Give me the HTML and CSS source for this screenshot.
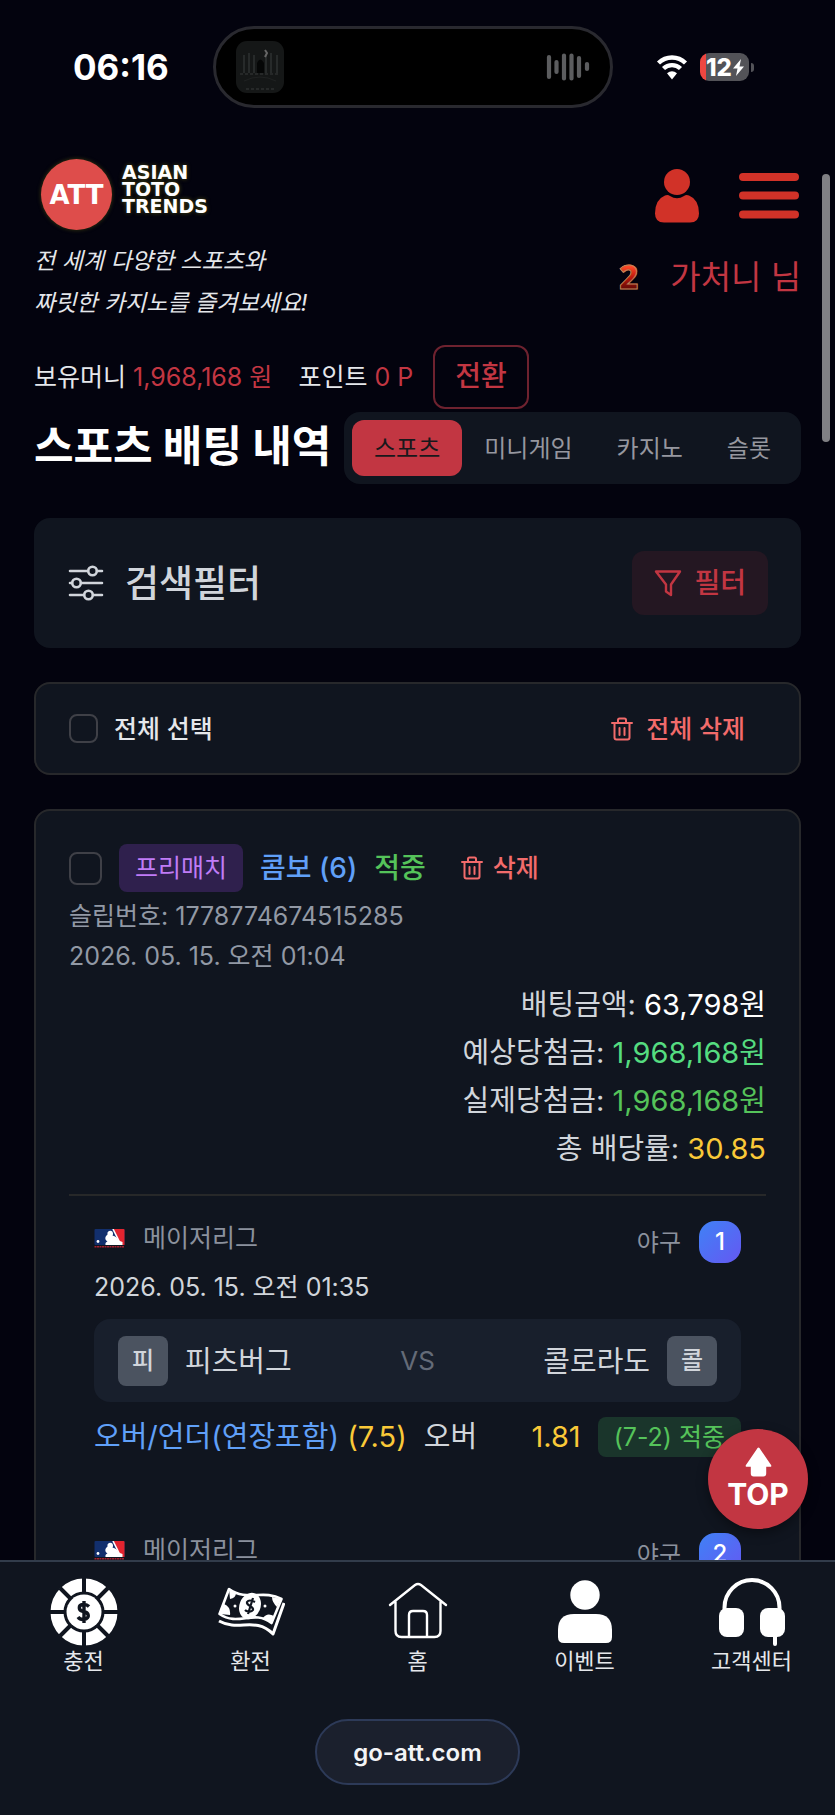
FILE: index.html
```html
<!DOCTYPE html>
<html lang="ko">
<head>
<meta charset="utf-8">
<meta name="viewport" content="width=device-width, initial-scale=1">
<title>스포츠 배팅 내역</title>
<link rel="stylesheet" href="styles.css">
</head>
<body>
<svg width="0" height="0" class="defs" aria-hidden="true">
  <symbol id="trash" viewBox="0 0 22 24"><path d="M1 6h20M7 6V3a1.500 1.500 0 0 1 1.500-1.500h5A1.500 1.500 0 0 1 15 3v3M3.500 6v14.500a2 2 0 0 0 2 2h11a2 2 0 0 0 2-2V6M8.500 11v7M13.500 11v7" fill="none" stroke="currentColor" stroke-width="2" stroke-linecap="round"/></symbol>
  <symbol id="mlb" viewBox="0 0 30 19"><rect width="30" height="16" rx="1" fill="#122f6d"/><path d="M19 0h10a1 1 0 0 1 1 1v15h-4z" fill="#e3242f"/><path d="M11 16c-.5-2 .5-3 2-3.500-2-1-2.500-3-2-4.500.5-1.300 1.500-2 2-2.500C12.500 3 14 1.800 15.800 1.800c1.700 0 2.700 1.200 2.700 2.700 0 1 0 1.500-.5 2 3 .5 5 2.500 6 5l4 1.500v3z" fill="#fff"/><path d="M18.500 0l6.500 13" stroke="#fff" stroke-width="1.600"/><circle cx="3.500" cy="12.500" r="1.400" fill="#fff"/><path d="M0 17.800h30" stroke="#a3202f" stroke-width="1.600" stroke-dasharray="2 .5"/></symbol>
</svg>
<div class="app">
  <main class="screen">
    <div class="status">
      <time class="clock">06:16</time>
      <div class="island">
        <svg class="art" viewBox="0 0 48 52" aria-hidden="true"><rect width="48" height="52" rx="11" fill="#151717"/><path d="M8 14v18M13 12v20M18 14v18M30 14v18M35 12v20M41 14v18" stroke="#272a2a" stroke-width="2"/><path d="M21 32V22q3-7 7 0v10z" fill="#050606"/><path d="M4 33h40M10 48h30" stroke="#383b3b" stroke-width="1" stroke-dasharray="3 2"/><path d="M29 9l2 3-2 4" stroke="#666" stroke-width="2" fill="none"/><path d="M8 40q16-8 32 0" stroke="#202222" fill="none"/></svg>
        <svg class="wave" viewBox="0 0 44 28" aria-hidden="true"><path d="M3 4v20M10.500 9v10M18 2.500v23M25.500 2.500v23M33 5v18M41 11v5" stroke="#5c5d5f" stroke-width="4.200" stroke-linecap="round"/></svg>
      </div>
      <div class="signals">
        <svg class="wifi" viewBox="0 0 32 26" aria-hidden="true"><path d="M2.500 9a19.500 19.500 0 0 1 27 0M7.500 14.500a12.300 12.300 0 0 1 17 0" fill="none" stroke="#fff" stroke-width="4.400"/><path d="M11 19.300q5-4 10 0L16 25.500z" fill="#fff"/></svg>
        <div class="battery"><span>12</span><svg viewBox="0 0 11 17" aria-hidden="true"><path d="M8 0L0 9.500h4.500L3 17l8-9.500H6.500z" fill="#fff"/></svg></div>
        <i class="battery-tip"></i>
      </div>
    </div>

    <header class="header">
      <div class="brand">
        <div class="logo">
          <span class="logo-mark">ATT</span>
          <span class="logo-name">ASIAN<br>TOTO<br>TRENDS</span>
        </div>
        <p class="tagline">전 세계 다양한 스포츠와<br>짜릿한 카지노를 즐겨보세요!</p>
      </div>
      <div class="account">
        <div class="account-icons">
          <button class="icon-btn" aria-label="내 정보"><svg class="person" viewBox="0 0 44 54"><ellipse cx="22" cy="13" rx="13" ry="13"/><path d="M10 26.500q3-1 5 .5 7 4.500 14 0 2-1.500 5-.5 10 4 10 18 0 9-9 9H9q-9 0-9-9 0-14 10-18z"/></svg></button>
          <button class="icon-btn" aria-label="메뉴"><svg class="menu" viewBox="0 0 60 46"><path d="M4 4h52M4 22.500h52M4 41.500h52" stroke-width="8" stroke-linecap="round"/></svg></button>
        </div>
        <div class="user"><span class="level">2</span><span>가처니 님</span></div>
      </div>
    </header>

    <div class="balance">
      <span>보유머니 <b>1,968,168 원</b></span>
      <span>포인트 <b>0 P</b></span>
      <button class="convert">전환</button>
    </div>

    <div class="title-row">
      <h1>스포츠 배팅 내역</h1>
      <div class="tabs">
        <button class="tab active">스포츠</button><button class="tab">미니게임</button><button class="tab">카지노</button><button class="tab">슬롯</button>
      </div>
    </div>

    <section class="filter card">
      <svg class="sliders" viewBox="0 0 36 36" aria-hidden="true"><g fill="none" stroke="currentColor" stroke-width="2.600" stroke-linecap="round"><path d="M2 6h18M29 6h5M2 18h2M13 18h21M2 30h14M25 30h9"/><circle cx="24.500" cy="6" r="4.300"/><circle cx="8.500" cy="18" r="4.300"/><circle cx="20.500" cy="30" r="4.300"/></g></svg>
      <h2>검색필터</h2>
      <button class="filter-btn"><svg viewBox="0 0 28 28" aria-hidden="true"><path d="M2 2.500h24L17 15.500v10.500l-5-3.500v-7z" fill="none" stroke="currentColor" stroke-width="2.400" stroke-linejoin="round"/></svg><span class="lift">필터</span></button>
    </section>

    <section class="select-all card outlined">
      <label><input type="checkbox" class="check"><span class="lift">전체 선택</span></label>
      <button class="delete"><svg><use href="#trash"/></svg><span class="lift">전체 삭제</span></button>
    </section>

    <section class="bet card outlined">
      <div class="bet-head">
        <input type="checkbox" class="check large" aria-label="배팅 선택">
        <span class="badge">프리매치</span>
        <span class="combo lift">콤보 (6)</span>
        <span class="win lift">적중</span>
        <button class="delete"><svg><use href="#trash"/></svg><span class="lift">삭제</span></button>
      </div>
      <p class="meta">슬립번호: <span class="serial">1778774674515285</span><br>2026. 05. 15. 오전 01:04</p>
      <div class="amounts">
        <div>배팅금액: <b>63,798원</b></div>
        <div>예상당첨금: <b class="expected">1,968,168원</b></div>
        <div>실제당첨금: <b class="win">1,968,168원</b></div>
        <div>총 배당률: <b class="odds">30.85</b></div>
      </div>
      <article class="match">
        <div class="league"><div class="league-name"><svg><use href="#mlb"/></svg><span>메이저리그</span></div><span class="sport">야구</span><span class="num">1</span></div>
        <time class="when">2026. 05. 15. 오전 01:35</time>
        <div class="teams">
          <div><span class="avatar">피</span><span class="lift">피츠버그</span></div>
          <span class="vs">VS</span>
          <div><span class="lift">콜로라도</span><span class="avatar">콜</span></div>
        </div>
        <div class="pick"><span class="market">오버/언더(연장포함) <span class="odds">(7.5)</span></span><span>오버</span><span class="odds rate">1.81</span><span class="result">(7-2) 적중</span></div>
      </article>
      <article class="match">
        <div class="league"><div class="league-name"><svg><use href="#mlb"/></svg><span>메이저리그</span></div><span class="sport">야구</span><span class="num">2</span></div>
      </article>
    </section>
    <i class="thumb"></i>
    <button class="top"><svg viewBox="0 0 28 30" aria-hidden="true"><path d="M14 0q1 0 2 2l11 16q1 2-1 2h-4v7q0 3-3 3H9q-3 0-3-3v-7H2q-2 0-1-2L12 2q1-2 2-2z" fill="#fff"/></svg>TOP</button>
  </main>

  <footer class="footer">
    <nav class="nav">
      <a href="#"><svg viewBox="0 0 68 68" aria-hidden="true"><circle cx="34" cy="34" r="27" fill="none" stroke="#fff" stroke-width="13"/><path d="M34 0v14M34 54v14M0 34h14M54 34h14M10 10l11 11M47 47l11 11M58 10L47 21M21 47L10 58" stroke="#10151f" stroke-width="4"/><circle cx="34" cy="34" r="17.500" fill="#fff"/><path d="M39 28.500q-2.500-2.500-6-2c-5 .5-5 6 .5 7s7 6.500.5 8q-4 .5-6-2.500M34 23v22" fill="none" stroke="#10151f" stroke-width="3.400"/></svg>충전</a>
      <a href="#"><svg viewBox="0 0 68 68" aria-hidden="true"><g fill="none" stroke="#fff" stroke-width="2.600" stroke-linejoin="round"><path d="M12 11L2.500 36c19 13 34-5 52 9l10-24C46 11 30 24 12 11z"/><path d="M2 43c20 11 36-5 54 13l11-31" stroke-width="3"/></g><path d="M12 11l7 4q0 5-6 6zM3 36l4-10q7 3 6 11zM64 21l-9-2q0 5 5 10zM55 45l-9-5q4-6 11-2z" fill="#fff"/><ellipse cx="33" cy="28" rx="10.500" ry="13.500" transform="rotate(22 33 28)" fill="#fff"/><path d="M38 24q-6-3-8 0c-1 4 7 4 6 8-2 3-7 1-8 0M36 20l-5 16" fill="none" stroke="#10151f" stroke-width="2.200"/><circle cx="18" cy="28" r="1.500" fill="#fff"/><circle cx="48" cy="28" r="1.500" fill="#fff"/></svg>환전</a>
      <a href="#"><svg viewBox="0 0 68 68" aria-hidden="true"><path d="M6 27L31 7q3-2 6 0l25 20M11.500 24v29q0 6 6 6h33q6 0 6-6V24M25 59V37q0-4 4-4h10q4 0 4 4v22" fill="none" stroke="#fff" stroke-width="2.400" stroke-linecap="round"/></svg>홈</a>
      <a href="#"><svg viewBox="0 0 68 68" aria-hidden="true"><circle cx="34" cy="17" r="14.700" fill="#fff"/><path d="M7 59V52q0-16 16-16h22q16 0 16 16v7q0 6-6 6H13q-6 0-6-6z" fill="#fff"/></svg>이벤트</a>
      <a href="#"><svg viewBox="0 0 68 68" aria-hidden="true"><path d="M6.500 35V29.500a27.500 27.500 0 0 1 55 0V35" fill="none" stroke="#fff" stroke-width="4"/><path d="M57 55v11" stroke="#fff" stroke-width="4" stroke-linecap="round"/><rect x="1" y="30" width="25" height="29" rx="8" fill="#fff"/><rect x="42" y="30" width="25" height="29" rx="8" fill="#fff"/></svg>고객센터</a>
    </nav>
    <button class="url">go-att.com</button>
  </footer>
</div>
</body>
</html>
```
FILE: styles.css
```css
* { box-sizing: border-box; }

body {
  margin: 0;
  background: #03030e;
  color: #e5e7eb;
  font-family: Inter, "Noto Sans CJK KR", sans-serif;
  font-size: 24px;
}

button {
  border: 0;
  padding: 0;
  background: none;
  color: inherit;
  font: inherit;
}

h1, h2, p { margin: 0; }
b { font-weight: 400; }
svg { display: block; flex: none; }
.defs { position: absolute; }
.lift { padding-bottom: 4px; }

.app {
  display: flex;
  flex-direction: column;
  height: 100vh;
}

.screen {
  position: relative;
  flex: 1;
  min-height: 0;
  overflow: hidden;
  padding: 0 34px;
}

/* Status bar */
.status {
  display: grid;
  grid-template-columns: 179px 400px 1fr;
  align-items: center;
  padding-top: 26px;
}
.clock {
  padding-left: 39px;
  color: #fff;
  font-size: 35px;
  font-weight: 700;
}
.island {
  display: flex;
  align-items: center;
  justify-content: space-between;
  height: 82px;
  padding: 0 20px;
  border: 3px solid #29292f;
  border-radius: 41px;
  background: #000;
}
.art { width: 48px; height: 52px; }
.wave { width: 44px; height: 28px; }
.signals {
  display: flex;
  align-items: center;
  padding-left: 43px;
}
.wifi { width: 32px; height: 26px; margin-right: 12px; }
.battery {
  display: flex;
  align-items: center;
  gap: 1px;
  width: 49px;
  height: 28px;
  padding-left: 6px;
  border-radius: 9px;
  background: linear-gradient(90deg, #ee4741 6px, #535358 6px);
  color: #fff;
  font-size: 24px;
  font-weight: 800;
}
.battery svg { width: 11px; height: 17px; }
.battery-tip {
  width: 3px;
  height: 9px;
  margin-left: 2px;
  border-radius: 0 4px 4px 0;
  background: #535358;
}

/* Header */
.header {
  display: flex;
  justify-content: space-between;
  padding-top: 51px;
}
.logo {
  display: flex;
  gap: 10px;
  height: 71px;
  padding-left: 7px;
  color: #fff;
  font-family: "DejaVu Sans", sans-serif;
  font-weight: 700;
}
.logo-mark {
  display: flex;
  align-items: center;
  justify-content: center;
  width: 71px;
  border-radius: 50%;
  background: #de4d4b;
  box-shadow: 0 0 4px #3a3a10;
  font-size: 26px;
}
.logo-name {
  padding-top: 5px;
  font-size: 19px;
  line-height: 17px;
  text-shadow: 0 0 4px #4a4a10;
}
.tagline {
  padding-top: 10px;
  font-size: 23px;
  font-style: italic;
  line-height: 42px;
}
.account-icons {
  display: flex;
  align-items: center;
  justify-content: flex-end;
  gap: 40px;
  height: 73px;
  padding-right: 2px;
}
.icon-btn { fill: #d13228; stroke: #d13228; stroke-width: 0; }
.person { width: 44px; height: 54px; }
.menu { width: 60px; height: 46px; }
.user {
  display: flex;
  align-items: center;
  justify-content: flex-end;
  gap: 30px;
  padding-top: 19px;
  color: #c23642;
  font-size: 33px;
  line-height: 52px;
}
.level {
  padding: 0 2px;
  background: linear-gradient(#ff4a28 30%, #c0180c 50%, #6d0b06 70%);
  background-clip: text;
  color: transparent;
  font-family: "Noto Sans", sans-serif;
  font-size: 33px;
  font-weight: 800;
  -webkit-text-stroke: 1px #b98558;
}

.balance {
  display: flex;
  align-items: center;
  gap: 26px;
  margin-top: 21px;
  font-size: 25px;
}
.balance span { padding-bottom: 4px; }
.balance b { color: #c23642; }
.convert {
  height: 64px;
  margin-left: -6px;
  padding: 0 20px 6px;
  border: 2px solid #6e222f;
  border-radius: 12px;
  color: #c23642;
  font-size: 28px;
  font-weight: 500;
}

.title-row {
  display: flex;
  align-items: center;
  justify-content: space-between;
  margin-top: 3px;
  white-space: nowrap;
}
h1 {
  padding-bottom: 4px;
  color: #fff;
  font-size: 43px;
  font-weight: 700;
  line-height: 60px;
}
.tabs {
  display: flex;
  padding: 8px;
  border-radius: 16px;
  background: #10151f;
}
.tab {
  height: 56px;
  padding: 0 22px 4px;
  border-radius: 12px;
  color: #96979f;
}
.tab.active { background: #c23642; color: #18181b; }

/* Cards */
.card {
  margin-top: 34px;
  padding: 0 33px;
  border-radius: 16px;
  background: #10151f;
}
.outlined { border: 2px solid #27282b; }

.filter {
  display: flex;
  align-items: center;
  height: 130px;
  color: #d1d5db;
}
.sliders { width: 38px; height: 36px; margin-right: 20px; }
h2 { padding-bottom: 4px; font-size: 37px; font-weight: 500; }
.filter-btn {
  display: flex;
  align-items: center;
  gap: 12px;
  height: 64px;
  margin-left: auto;
  padding: 0 22px;
  border-radius: 12px;
  background: #241722;
  color: #c23642;
  font-size: 28px;
  font-weight: 500;
}
.filter-btn svg { width: 28px; height: 28px; }

.select-all {
  display: flex;
  align-items: center;
  justify-content: space-between;
  height: 93px;
  padding-right: 54px;
  font-size: 25px;
}
.select-all label {
  display: flex;
  align-items: center;
  gap: 16px;
  font-weight: 500;
}
.check {
  appearance: none;
  width: 29px;
  height: 29px;
  margin: 0;
  border: 2px solid #3f4047;
  border-radius: 8px;
}
.check.large { width: 33px; height: 33px; }
.delete {
  display: flex;
  align-items: center;
  gap: 13px;
  color: #f26b6b;
  font-weight: 500;
}
.delete svg { width: 22px; height: 24px; }

/* Bet slip */
.bet { padding-top: 33px; }
.bet-head {
  display: flex;
  align-items: center;
  gap: 17px;
  font-size: 28px;
}
.badge {
  padding: 0 16px;
  border-radius: 8px;
  background: #2f204d;
  color: #c07cf7;
  font-size: 25px;
  line-height: 48px;
}
.combo { color: #60a0f8; }
.win { color: #55c35a; }
.combo, .bet-head .win { font-weight: 500; }
.bet-head .delete { gap: 10px; margin-left: 18px; font-size: 25px; }
.meta {
  padding-top: 4px;
  color: #9299a5;
  font-size: 25px;
  line-height: 40px;
}
.amounts {
  padding-top: 5px;
  padding-bottom: 21px;
  border-bottom: 2px solid #272829;
  color: #d1d5db;
  font-size: 29px;
  line-height: 48px;
  text-align: right;
}
.amounts b { color: #fff; }
.amounts .expected { color: #55dc80; }
.amounts .win { color: #55c35a; }
.amounts .odds, .odds { color: #fac938; }

.match { padding: 25px 25px 51px; }
.league {
  display: flex;
  align-items: center;
  height: 42px;
  color: #8b919d;
}
.league-name {
  display: flex;
  align-items: center;
  align-self: flex-start;
  font-size: 25px;
  line-height: 34px;
}
.league svg { width: 31px; height: 19px; margin-right: 18px; }
.sport { margin-left: auto; margin-right: 18px; padding-bottom: 3px; }
.num {
  width: 42px;
  border-radius: 16px;
  background: linear-gradient(135deg, #3f82f6, #6558f2);
  color: #fff;
  font-weight: 500;
  line-height: 42px;
  text-align: center;
}
.when {
  display: block;
  color: #d1d5db;
  font-size: 25px;
  line-height: 48px;
}
.teams {
  display: flex;
  align-items: center;
  justify-content: space-between;
  height: 83px;
  margin-top: 8px;
  padding: 0 24px;
  border-radius: 16px;
  background: #181f2c;
  color: #d1d5db;
  font-size: 29px;
}
.teams div { display: flex; align-items: center; gap: 17px; }
.avatar {
  width: 50px;
  border-radius: 8px;
  background: #4b5360;
  font-size: 24px;
  font-weight: 500;
  line-height: 50px;
  text-align: center;
}
.vs { color: #646b78; font-size: 26px; }
.pick {
  display: flex;
  align-items: center;
  gap: 17px;
  margin-top: 15px;
  color: #d1d5db;
  font-size: 29px;
  line-height: 40px;
  white-space: nowrap;
}
.market { color: #60a0f8; }
.rate { margin-left: auto; }
.result {
  padding: 0 16px;
  border-radius: 8px;
  background: #1a352b;
  color: #55c35a;
  font-size: 25px;
}

.thumb {
  position: absolute;
  top: 174px;
  right: 5px;
  width: 8px;
  height: 268px;
  border-radius: 4px;
  background: #808084;
}
.top {
  position: absolute;
  right: 27px;
  bottom: 31px;
  display: flex;
  flex-direction: column;
  align-items: center;
  justify-content: center;
  width: 100px;
  height: 100px;
  border-radius: 50%;
  background: #c23642;
  box-shadow: 0 4px 12px #0006;
  color: #fff;
  font-size: 30px;
  font-weight: 700;
  line-height: 34px;
}
.top svg { width: 27px; height: 30px; }

/* Bottom bar */
.footer {
  display: flex;
  flex-direction: column;
  align-items: center;
  padding-bottom: 30px;
  border-top: 2px solid #323c4b;
  background: #10151f;
}
.nav {
  display: grid;
  grid-template-columns: repeat(5, 1fr);
  width: 100%;
  padding-top: 16px;
}
.nav a {
  display: flex;
  flex-direction: column;
  align-items: center;
  color: #e5e7eb;
  font-size: 22px;
  line-height: 30px;
  text-decoration: none;
}
.nav svg { width: 68px; height: 68px; }
.url {
  height: 66px;
  margin-top: 43px;
  padding: 0 36px;
  border: 2px solid #2d3a58;
  border-radius: 33px;
  background: #1b202d;
  color: #f3f4f6;
  font-size: 24px;
  font-weight: 600;
}
```
